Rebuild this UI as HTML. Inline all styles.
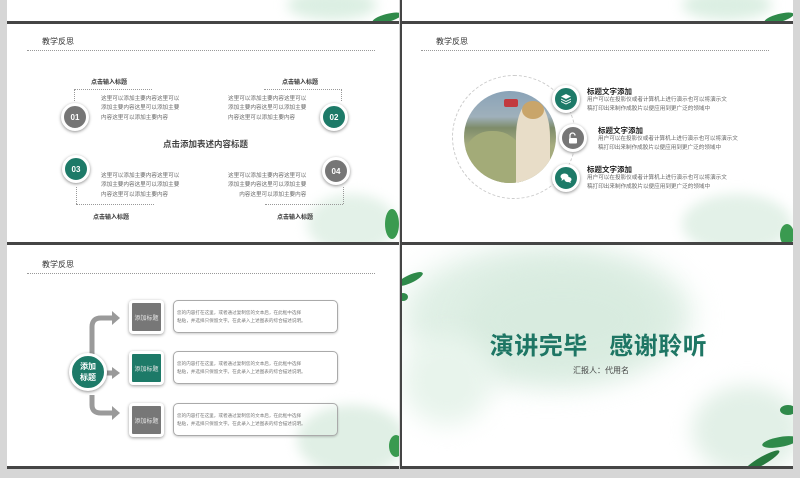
<!DOCTYPE html>
<html><head><meta charset="utf-8"><style>
*{margin:0;padding:0;box-sizing:border-box}
body{width:800px;height:478px;background:#d6d6d6;position:relative;overflow:hidden;font-family:"Liberation Sans","Noto Sans CJK SC",sans-serif}
.s{position:absolute;background:#fff;overflow:hidden}
.bb{border-bottom:3px solid #454545}
.bl{border-left:2px solid #454545}
.a{position:absolute}
.hd{position:absolute;font-size:8px;color:#333}
.dl{position:absolute;border-top:1px dotted #999;height:0}
.t6{font-size:5.6px;color:#666;line-height:9.3px;white-space:nowrap}
.ttl{font-size:6px;font-weight:bold;color:#333;white-space:nowrap}
.circ{position:absolute;border-radius:50%;border:3px solid #fff;box-shadow:0 1px 3px rgba(0,0,0,.45);color:#fff;font-weight:bold;font-size:8px;display:flex;align-items:center;justify-content:center}
.wc{position:absolute;border-radius:50%;filter:blur(6px)}
.leaf{position:absolute;background:#2f8a4a;border-radius:50%}
.sq{position:absolute;width:35px;height:34px;border:3px solid #fff;border-radius:4px;box-shadow:0 1px 3px rgba(0,0,0,.4);color:#e8e8e8;font-size:6px;display:flex;align-items:center;justify-content:center}
.tb{position:absolute;left:173px;width:165px;height:33px;border:1.5px solid #aaa;border-radius:5px;box-shadow:0 1px 2px rgba(0,0,0,.2);padding:8px 0 0 3px;font-size:4.6px;color:#777;line-height:7.5px;white-space:nowrap}
</style></head><body>

<div class="s bb" style="left:7px;top:0;width:392px;height:24px">
 <div class="wc" style="left:280px;top:-10px;width:90px;height:30px;background:#dcefe3"></div>
 <div class="leaf" style="left:365px;top:14px;width:30px;height:8px;transform:rotate(-15deg)"></div>
</div>
<div class="s bb bl" style="left:400px;top:0;width:393px;height:24px">
 <div class="wc" style="left:280px;top:-10px;width:90px;height:30px;background:#dcefe3"></div>
 <div class="leaf" style="left:362px;top:14px;width:30px;height:8px;transform:rotate(-15deg)"></div>
</div>

<div class="s bb" style="left:7px;top:24px;width:392px;height:221px">
 <div class="wc" style="left:300px;top:170px;width:90px;height:60px;background:#e3f1e8"></div>
 <div class="leaf" style="left:378px;top:185px;width:14px;height:30px;background:#3a9a50"></div>
 <div class="hd" style="left:35px;top:12px">教学反思</div>
 <div class="dl" style="left:20px;top:26px;width:348px"></div>
 <div class="a ttl" style="left:84px;top:53px">点击输入标题</div>
 <div class="a ttl" style="left:275px;top:53px">点击输入标题</div>
 <div class="a ttl" style="left:86px;top:188px">点击输入标题</div>
 <div class="a ttl" style="left:270px;top:188px">点击输入标题</div>
 <div class="dl" style="left:67px;top:65px;width:78px"></div>
 <div class="a" style="left:67px;top:65px;height:12px;border-left:1px dotted #999"></div>
 <div class="dl" style="left:257px;top:65px;width:78px"></div>
 <div class="a" style="left:334px;top:65px;height:12px;border-left:1px dotted #999"></div>
 <div class="dl" style="left:69px;top:180px;width:78px"></div>
 <div class="a" style="left:69px;top:163px;height:17px;border-left:1px dotted #999"></div>
 <div class="dl" style="left:258px;top:180px;width:78px"></div>
 <div class="a" style="left:336px;top:163px;height:17px;border-left:1px dotted #999"></div>
 <div class="a t6" style="left:94px;top:71px">这里可以添加主要内容这里可以<br>添加主要内容这里可以添加主要<br>内容这里可以添加主要内容</div>
 <div class="a t6" style="left:221px;top:71px">这里可以添加主要内容这里可以<br>添加主要内容这里可以添加主要<br>内容这里可以添加主要内容</div>
 <div class="a t6" style="left:94px;top:148px">这里可以添加主要内容这里可以<br>添加主要内容这里可以添加主要<br>内容这里可以添加主要内容</div>
 <div class="a t6" style="left:221px;top:148px;text-align:right">这里可以添加主要内容这里可以<br>添加主要内容这里可以添加主要<br>内容这里可以添加主要内容</div>
 <div class="a" style="left:156px;top:114px;font-size:8.5px;color:#444;font-weight:bold">点击添加表述内容标题</div>
 <div class="circ" style="left:54px;top:79px;width:28px;height:28px;background:#767676">01</div>
 <div class="circ" style="left:313px;top:79px;width:28px;height:28px;background:#1d7a68">02</div>
 <div class="circ" style="left:55px;top:131px;width:28px;height:28px;background:#1d7a68">03</div>
 <div class="circ" style="left:315px;top:133px;width:28px;height:28px;background:#767676">04</div>
</div>

<div class="s bb bl" style="left:400px;top:24px;width:393px;height:221px">
 <div class="wc" style="left:280px;top:170px;width:110px;height:60px;background:#e3f1e8"></div>
 <div class="leaf" style="left:378px;top:200px;width:14px;height:22px;background:#3a9a50"></div>
 <div class="hd" style="left:34px;top:12px">教学反思</div>
 <div class="dl" style="left:19px;top:26px;width:348px"></div>
 <div class="a" style="left:50px;top:51px;width:124px;height:124px;border-radius:50%;border:1px dashed #ccc"></div>
 <div class="a" style="left:62px;top:67px;width:92px;height:92px;border-radius:50%;overflow:hidden;background:linear-gradient(180deg,#8aa3b8 0%,#9fb0bb 28%,#7e8c6a 40%,#a7ad80 60%,#9aa070 100%)">
  <div class="a" style="left:0;top:40px;width:60px;height:60px;border-radius:45% 50% 0 0;background:#a3ab78"></div>
  <div class="a" style="left:52px;top:12px;width:34px;height:85px;border-radius:40% 40% 0 0;background:#e8ddc8"></div>
  <div class="a" style="left:58px;top:10px;width:22px;height:18px;border-radius:50%;background:#c9a56a"></div>
  <div class="a" style="left:40px;top:8px;width:14px;height:8px;background:#c23a3f;border-radius:2px"></div>
 </div>
 <div class="circ" style="left:150px;top:61px;width:28px;height:28px;background:#1d7a68"><svg width="12" height="12" viewBox="0 0 12 12" fill="#fff"><path d="M6 1 L11 3.5 L6 6 L1 3.5Z"/><path d="M1 5.5 L6 8 L11 5.5 L11 6.5 L6 9 L1 6.5Z"/><path d="M1 8 L6 10.5 L11 8 L11 9 L6 11.5 L1 9Z"/></svg></div>
 <div class="circ" style="left:157px;top:100px;width:28px;height:28px;background:#767676"><svg width="12" height="12" viewBox="0 0 12 12"><path d="M3 6 V3.5 A2.5 2.5 0 0 1 8 3.5" fill="none" stroke="#fff" stroke-width="1.3"/><rect x="2" y="6" width="8" height="5.5" rx="1" fill="#fff"/></svg></div>
 <div class="circ" style="left:150px;top:140px;width:28px;height:28px;background:#1d7a68"><svg width="12" height="12" viewBox="0 0 12 12" fill="#fff"><ellipse cx="4.5" cy="4.5" rx="4" ry="3"/><path d="M2 6.5 L1.5 9 L4 7Z"/><ellipse cx="8" cy="7.5" rx="3.5" ry="2.6"/><path d="M10 9 L11 11 L8.5 10Z"/></svg></div>
 <div class="a" style="left:185px;top:62px;font-size:7.5px;font-weight:bold;color:#222">标题文字添加</div>
 <div class="a t6" style="left:185px;top:72px;line-height:8.5px">用户可以在投影仪或者计算机上进行演示也可以将演示文<br>稿打印出来制作成胶片以便应用到更广泛的领域中</div>
 <div class="a" style="left:196px;top:101px;font-size:7.5px;font-weight:bold;color:#222">标题文字添加</div>
 <div class="a t6" style="left:196px;top:111px;line-height:8.5px">用户可以在投影仪或者计算机上进行演示也可以将演示文<br>稿打印出来制作成胶片以便应用到更广泛的领域中</div>
 <div class="a" style="left:185px;top:140px;font-size:7.5px;font-weight:bold;color:#222">标题文字添加</div>
 <div class="a t6" style="left:185px;top:150px;line-height:8.5px">用户可以在投影仪或者计算机上进行演示也可以将演示文<br>稿打印出来制作成胶片以便应用到更广泛的领域中</div>
</div>

<div class="s bb" style="left:7px;top:245px;width:392px;height:224px">
 <div class="wc" style="left:290px;top:160px;width:110px;height:70px;background:#e0efe5"></div>
 <div class="leaf" style="left:382px;top:190px;width:14px;height:22px;background:#3a9a50"></div>
 <div class="hd" style="left:35px;top:14px">教学反思</div>
 <div class="dl" style="left:20px;top:28px;width:348px"></div>
 <svg class="a" style="left:0;top:0" width="200" height="224">
  <g fill="none" stroke="#9a9a9a" stroke-width="5">
   <path d="M85 128 V82 Q85 73 94 73 H106"/>
   <path d="M85 150 V160 Q85 168 94 168 H106"/>
   <path d="M99 128 H106"/>
  </g>
  <g fill="#9a9a9a"><path d="M105 66 L113 73 L105 80Z"/><path d="M105 161 L113 168 L105 175Z"/><path d="M105 122 L113 128 L105 134Z"/></g>
 </svg>
 <div class="circ" style="left:62px;top:108px;width:38px;height:38px;background:#1d7a68;font-size:8px;line-height:11px;text-align:center">添加<br>标题</div>
 <div class="sq" style="left:122px;top:55px;background:#777">添加标题</div>
 <div class="sq" style="left:122px;top:106px;background:#1d7a68">添加标题</div>
 <div class="sq" style="left:122px;top:158px;background:#777">添加标题</div>
 <div class="tb" style="left:166px;top:55px">您的内容打在这里，或者通过复制您的文本后，在此框中选择<br>粘贴，并选择只保留文字。在此录入上述图表的综合描述说明。</div>
 <div class="tb" style="left:166px;top:106px">您的内容打在这里，或者通过复制您的文本后，在此框中选择<br>粘贴，并选择只保留文字。在此录入上述图表的综合描述说明。</div>
 <div class="tb" style="left:166px;top:158px">您的内容打在这里，或者通过复制您的文本后，在此框中选择<br>粘贴，并选择只保留文字。在此录入上述图表的综合描述说明。</div>
</div>

<div class="s bb bl" style="left:400px;top:245px;width:393px;height:224px">
 <div class="wc" style="left:0px;top:0px;width:290px;height:140px;background:#e0f0e6;filter:blur(14px)"></div>
 <div class="wc" style="left:60px;top:20px;width:200px;height:110px;background:#d8ebdf;filter:blur(16px)"></div>
 <div class="wc" style="left:0px;top:90px;width:90px;height:90px;background:#e8f4ec;filter:blur(12px)"></div>
 <div class="wc" style="left:290px;top:140px;width:110px;height:90px;background:#e2f0e7;filter:blur(10px)"></div>
 <div class="leaf" style="left:-6px;top:30px;width:28px;height:8px;transform:rotate(-25deg)"></div>
 <div class="leaf" style="left:-4px;top:48px;width:10px;height:8px"></div>
 <div class="leaf" style="left:360px;top:192px;width:36px;height:10px;transform:rotate(-10deg)"></div>
 <div class="leaf" style="left:378px;top:160px;width:16px;height:10px"></div>
 <div class="leaf" style="left:340px;top:212px;width:40px;height:8px;transform:rotate(-30deg);background:#277a3e"></div>
 <div class="a" style="left:0;top:81px;width:393px;text-align:center;font-size:24px;font-weight:bold;color:#1e7664;letter-spacing:0.5px;white-space:pre">演讲完毕   感谢聆听</div>
 <div class="a" style="left:0;top:120px;width:398px;text-align:center;font-size:8px;color:#444">汇报人：代用名</div>
</div>
</body></html>
